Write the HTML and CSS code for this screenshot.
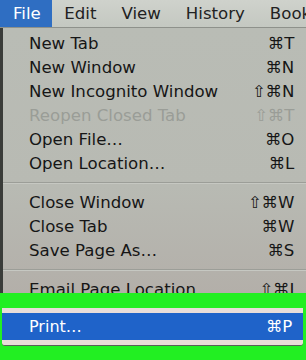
FILE: index.html
```html
<!DOCTYPE html>
<html>
<head>
<meta charset="utf-8">
<link rel="stylesheet" href="styles.css">
</head>
<body>
<div class="menubar">
  <span class="mb-item mb-active">File</span>
  <span class="mb-item">Edit</span>
  <span class="mb-item">View</span>
  <span class="mb-item">History</span>
  <span class="mb-item">Bookmarks</span>
</div>
<div class="panel">
  <div class="row"><span>New Tab</span><span class="sc">⌘T</span></div>
  <div class="row"><span>New Window</span><span class="sc">⌘N</span></div>
  <div class="row"><span>New Incognito Window</span><span class="sc">⇧⌘N</span></div>
  <div class="row disabled"><span>Reopen Closed Tab</span><span class="sc">⇧⌘T</span></div>
  <div class="row"><span>Open File…</span><span class="sc">⌘O</span></div>
  <div class="row"><span>Open Location…</span><span class="sc">⌘L</span></div>
  <div class="sep"></div>
  <div class="row"><span>Close Window</span><span class="sc">⇧⌘W</span></div>
  <div class="row"><span>Close Tab</span><span class="sc">⌘W</span></div>
  <div class="row"><span>Save Page As…</span><span class="sc">⌘S</span></div>
  <div class="sep"></div>
  <div class="row"><span>Email Page Location</span><span class="sc">⇧⌘I</span></div>
</div>
<div class="highlight">
  <div class="print-box">
    <div class="row print-row"><span>Print…</span><span class="sc">⌘P</span></div>
  </div>
</div>
</body>
</html>
```
FILE: styles.css
```css
* { box-sizing: border-box; }
html, body {
  margin: 0;
  padding: 0;
  width: 306px;
  height: 360px;
  overflow: hidden;
  font-family: "DejaVu Sans", "Liberation Sans", sans-serif;
}
.menubar {
  height: 28px;
  display: flex;
  align-items: center;
  background: linear-gradient(#cfd2cc, #c4c8c1);
  border-bottom: 1px solid #8e918b;
  white-space: nowrap;
  overflow: hidden;
  font-size: 16.6px;
  color: #222;
}
.mb-item {
  height: 100%;
  display: flex;
  align-items: center;
  padding: 0 12.5px;
  flex: none;
}
.mb-active {
  background: #2f6ec2;
  color: #fff;
  padding: 0 11px 0 13px;
}
.panel {
  height: 265px;
  overflow: hidden;
  padding-top: 3px;
  border-left: 3px solid #3a3c39;
  background: linear-gradient(#b9bcb5, #b8bab3 60%, #b3afa9);
  font-size: 16.6px;
  color: #161616;
}
.row {
  height: 24px;
  display: flex;
  justify-content: space-between;
  align-items: center;
  padding: 0 12px 0 26px;
  white-space: nowrap;
}
.sc {
  font-family: "DejaVu Sans", sans-serif;
  font-size: 16.6px;
  letter-spacing: -0.3px;
}
.disabled { color: #9a9d97; }
.sep {
  height: 15px;
  display: flex;
  align-items: center;
}
.sep::before {
  content: "";
  display: block;
  width: 100%;
  height: 1px;
  background: #9c9e98;
  box-shadow: 0 1px 0 #c6c8c2;
}
.highlight {
  height: 67px;
  background: #22ef22;
  padding: 15px 3px 0 2px;
}
.print-box {
  height: 38px;
  padding: 5px 0 5px;
  background: #e9ddd9;
  border-bottom: 1px solid #5b5f58;
  border-radius: 0 0 3px 3px;
}
.print-row {
  height: 27px;
  background: #1f63c9;
  color: #fff;
  padding: 0 11px 0 27px;
}
```
